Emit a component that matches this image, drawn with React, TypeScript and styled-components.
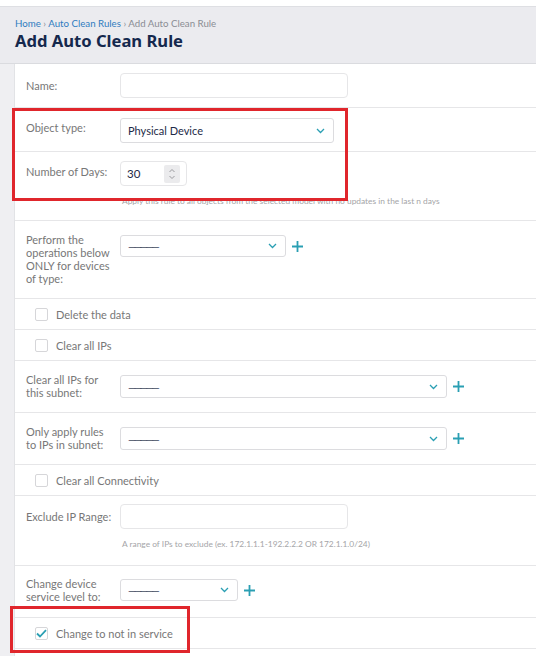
import React from "react";
import styled, { createGlobalStyle } from "styled-components";

const Global = createGlobalStyle`
  html, body { margin: 0; padding: 0; background: #efeff2; }
  body { font-family: Lato, "Noto Sans", sans-serif; }
  * { box-sizing: border-box; }
`;

const Page = styled.div`
  position: relative;
  width: 536px;
  height: 656px;
  overflow: hidden;
  background: #efeff2;
`;

const TopStrip = styled.div`
  height: 7px;
  background: #fff;
  border-bottom: 1px solid #dedfe3;
`;

const Header = styled.header`
  height: 57px;
  padding: 10px 15px 0;
  background: #ebebef;
  border-bottom: 1px solid #dadbdf;
`;

const Crumbs = styled.div`
  font-size: 9.7px;
  line-height: 12px;
  color: #8a8d94;
  a { color: #2f7cc0; text-decoration: none; }
`;

const Title = styled.h1`
  margin: 1px 0 0;
  font-family: "Noto Sans", sans-serif;
  font-weight: 700;
  font-size: 16.6px;
  line-height: 22px;
  color: #15284d;
`;

const Card = styled.div`
  margin-left: 14px;
  background: #fff;
  border-left: 1px solid #e2e3e6;
  min-height: 600px;
`;

const Row = styled.div<{ $pt: number; $pb: number }>`
  display: flex;
  align-items: flex-start;
  padding: ${(p) => p.$pt}px 0 ${(p) => p.$pb}px 11px;
  border-bottom: 1px solid #e6e6e8;
`;

const Label = styled.div<{ $pt?: number }>`
  width: 94px;
  flex: none;
  padding-top: ${(p) => p.$pt ?? 0}px;
  padding-right: 6px;
  font-size: 11px;
  line-height: 13px;
  color: #777;
`;

const Field = styled.div<{ $mt?: number }>`
  display: flex;
  flex-direction: column;
  margin-top: ${(p) => p.$mt ?? 0}px;
`;

const Inline = styled.div`
  display: flex;
  align-items: center;
  gap: 6px;
`;

const TextBox = styled.div<{ $w: number }>`
  width: ${(p) => p.$w}px;
  height: 25px;
  border: 1px solid #e6e6e8;
  border-radius: 4px;
  background: #fff;
`;

const SelectBox = styled.div<{ $w: number; $h: number }>`
  width: ${(p) => p.$w}px;
  height: ${(p) => p.$h}px;
  border: 1px solid #dcdcdf;
  border-radius: 3px;
  background: #fff;
  display: flex;
  align-items: center;
  justify-content: space-between;
  padding: 0 8px 0 7px;
  font-size: 11px;
  color: #1d2a48;
`;

const Dashes = styled.span`
  font-size: 10px;
  letter-spacing: -2px;
  color: #1d2a48;
`;

const NumberBox = styled.div`
  width: 67px;
  height: 25px;
  border: 1px solid #e6e6e8;
  border-radius: 4px;
  display: flex;
  align-items: center;
  justify-content: space-between;
  padding: 0 6px 0 6px;
  font-size: 11.5px;
  color: #1d2a48;
`;

const Spinner = styled.div`
  width: 16px;
  height: 18px;
  background: #ebebed;
  border-radius: 2px;
  display: flex;
  align-items: center;
  justify-content: center;
`;

const Help = styled.div`
  margin-top: 10px;
  padding-left: 2px;
  font-size: 8.4px;
  line-height: 11px;
  color: #a5a5a8;
  white-space: nowrap;
`;

const CheckRow = styled.label`
  display: flex;
  align-items: center;
  height: 31px;
  padding-left: 20px;
  border-bottom: 1px solid #e6e6e8;
  font-size: 11px;
  color: #777;
`;

const Box = styled.span`
  width: 13px;
  height: 13px;
  border: 1px solid #d6d6d9;
  border-radius: 2px;
  margin-right: 8px;
  display: flex;
  align-items: center;
  justify-content: center;
  background: #fff;
`;

const Mark = styled.div<{ $l: number; $t: number; $w: number; $h: number }>`
  position: absolute;
  left: ${(p) => p.$l}px;
  top: ${(p) => p.$t}px;
  width: ${(p) => p.$w}px;
  height: ${(p) => p.$h}px;
  border: 3px solid #e0262c;
  pointer-events: none;
`;

const TEAL = "#2a9fb3";

const Chevron = () => (
  <svg width="9" height="6" viewBox="0 0 9 6">
    <path d="M1 1l3.5 3.5L8 1" fill="none" stroke={TEAL} strokeWidth="1.3" />
  </svg>
);

const Plus = () => (
  <svg width="11" height="11" viewBox="0 0 11 11">
    <path d="M5.5 0v11M0 5.5h11" stroke={TEAL} strokeWidth="1.8" />
  </svg>
);

const Tick = () => (
  <svg width="11" height="9" viewBox="0 0 11 9">
    <path d="M1 4.5l3 3L10 1.2" fill="none" stroke={TEAL} strokeWidth="1.8" />
  </svg>
);

const UpDown = () => (
  <svg width="8" height="12" viewBox="0 0 8 12">
    <path d="M1.5 4L4 1.5 6.5 4M1.5 8L4 10.5 6.5 8" fill="none" stroke="#9a9a9e" strokeWidth="1" />
  </svg>
);

const Select = ({ w, h, value }: { w: number; h: number; value?: string }) => (
  <SelectBox $w={w} $h={h}>
    {value ? <span>{value}</span> : <Dashes>—————</Dashes>}
    <Chevron />
  </SelectBox>
);

const Check = ({ label, checked }: { label: string; checked?: boolean }) => (
  <CheckRow>
    <Box>{checked && <Tick />}</Box>
    {label}
  </CheckRow>
);

export default function App() {
  return (
    <Page>
      <Global />
      <TopStrip />
      <Header>
        <Crumbs>
          <a href="#">Home</a> › <a href="#">Auto Clean Rules</a> › Add Auto Clean Rule
        </Crumbs>
        <Title>Add Auto Clean Rule</Title>
      </Header>
      <Card>
        <Row $pt={9} $pb={9}>
          <Label $pt={6}>Name:</Label>
          <Field>
            <TextBox $w={228} />
          </Field>
        </Row>
        <Row $pt={10} $pb={8}>
          <Label $pt={3}>Object type:</Label>
          <Field>
            <Select w={214} h={25} value="Physical Device" />
          </Field>
        </Row>
        <Row $pt={9} $pb={13}>
          <Label $pt={4}>Number of Days:</Label>
          <Field>
            <NumberBox>
              <span>30</span>
              <Spinner>
                <UpDown />
              </Spinner>
            </NumberBox>
            <Help>Apply this rule to all objects from the selected model with no updates in the last n days</Help>
          </Field>
        </Row>
        <Row $pt={12} $pb={13}>
          <Label>Perform the operations below ONLY for devices of type:</Label>
          <Field $mt={2}>
            <Inline>
              <Select w={166} h={22} />
              <Plus />
            </Inline>
          </Field>
        </Row>
        <Check label="Delete the data" />
        <Check label="Clear all IPs" />
        <Row $pt={12} $pb={13}>
          <Label>Clear all IPs for this subnet:</Label>
          <Field $mt={2}>
            <Inline>
              <Select w={327} h={23} />
              <Plus />
            </Inline>
          </Field>
        </Row>
        <Row $pt={12} $pb={13}>
          <Label>Only apply rules to IPs in subnet:</Label>
          <Field $mt={2}>
            <Inline>
              <Select w={327} h={23} />
              <Plus />
            </Inline>
          </Field>
        </Row>
        <Check label="Clear all Connectivity" />
        <Row $pt={8} $pb={15}>
          <Label $pt={6}>Exclude IP Range:</Label>
          <Field>
            <TextBox $w={228} />
            <Help>A range of IPs to exclude (ex. 172.1.1.1-192.2.2.2 OR 172.1.1.0/24)</Help>
          </Field>
        </Row>
        <Row $pt={11} $pb={14}>
          <Label>Change device service level to:</Label>
          <Field $mt={2}>
            <Inline>
              <Select w={118} h={22} />
              <Plus />
            </Inline>
          </Field>
        </Row>
        <Check label="Change to not in service" checked />
      </Card>
      <Mark $l={12} $t={108} $w={336} $h={93} />
      <Mark $l={10} $t={606} $w={180} $h={47} />
    </Page>
  );
}
